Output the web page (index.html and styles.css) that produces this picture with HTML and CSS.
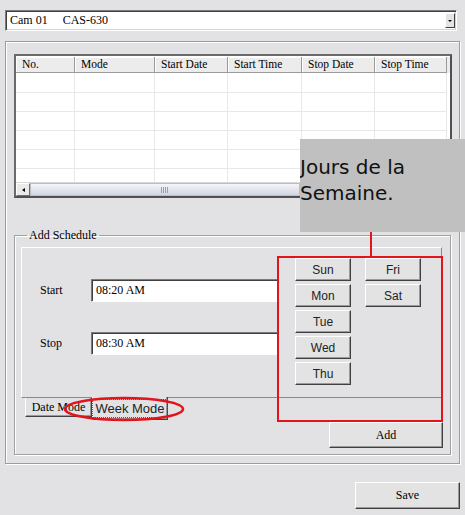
FILE: index.html
```html
<!DOCTYPE html>
<html>
<head>
<meta charset="utf-8">
<link rel="stylesheet" href="styles.css">
</head>
<body>
<div class="combo">
  <span class="combo-text"><span class="cam">Cam 01</span>CAS-630</span>
  <span class="combo-btn"><span class="tri"></span></span>
</div>

<div class="panel">
  <div class="list">
    <div class="lrow head">
      <div class="c c1">No.</div><div class="c c2">Mode</div><div class="c c3">Start Date</div><div class="c c4">Start Time</div><div class="c c5">Stop Date</div><div class="c c6">Stop Time</div>
    </div>
    <div class="lbody">
      <div class="lrow"><div class="c c1"></div><div class="c c2"></div><div class="c c3"></div><div class="c c4"></div><div class="c c5"></div><div class="c c6"></div></div>
      <div class="lrow"><div class="c c1"></div><div class="c c2"></div><div class="c c3"></div><div class="c c4"></div><div class="c c5"></div><div class="c c6"></div></div>
      <div class="lrow"><div class="c c1"></div><div class="c c2"></div><div class="c c3"></div><div class="c c4"></div><div class="c c5"></div><div class="c c6"></div></div>
      <div class="lrow"><div class="c c1"></div><div class="c c2"></div><div class="c c3"></div><div class="c c4"></div><div class="c c5"></div><div class="c c6"></div></div>
      <div class="lrow"><div class="c c1"></div><div class="c c2"></div><div class="c c3"></div><div class="c c4"></div><div class="c c5"></div><div class="c c6"></div></div>
      <div class="lrow"><div class="c c1"></div><div class="c c2"></div><div class="c c3"></div><div class="c c4"></div><div class="c c5"></div><div class="c c6"></div></div>
    </div>
    <div class="hscroll">
      <div class="sb-left"><span class="ltri"></span></div>
      <div class="sb-thumb"><span class="grip"></span></div>
    </div>
  </div>

  <fieldset class="sched">
    <legend>Add Schedule</legend>
    <div class="tabpanel">
      <div class="form">
        <div class="frow"><span class="flabel">Start</span><div class="field">08:20 AM</div></div>
        <div class="frow"><span class="flabel">Stop</span><div class="field">08:30 AM</div></div>
      </div>
      <div class="days">
        <div class="btn day">Sun</div>
        <div class="btn day">Mon</div>
        <div class="btn day">Tue</div>
        <div class="btn day">Wed</div>
        <div class="btn day">Thu</div>
        <div class="btn day">Fri</div>
        <div class="btn day">Sat</div>
      </div>
    </div>
    <div class="tabs">
      <div class="tab">Date Mode</div>
      <div class="tab sel"><span class="focus">Week Mode</span></div>
    </div>
    <div class="addrow"><div class="btn add">Add</div></div>
  </fieldset>
</div>

<div class="saverow"><div class="btn save">Save</div></div>

<div class="tip">Jours de la<br>Semaine.</div>
<div class="redline"></div>
<div class="redbox"></div>
<svg class="ellipse" width="124" height="28" viewBox="0 0 124 28"><ellipse cx="61" cy="13" rx="59" ry="11" fill="none" stroke="#e3141b" stroke-width="2.6"/></svg>
</body>
</html>
```

FILE: styles.css
```css
html, body {
  margin: 0;
  padding: 0;
}
body {
  width: 465px;
  height: 515px;
  background: #e2e2e4;
  font-family: "Liberation Serif", "DejaVu Serif", serif;
  font-size: 12px;
  color: #000;
  padding: 10px 0 0 5px;
  box-sizing: border-box;
  position: relative;
  overflow: hidden;
}

.combo {
  width: 452px;
  height: 21px;
  box-sizing: border-box;
  background: #fff;
  border: 1px solid;
  border-color: #7a7a7a #fff #fff #7a7a7a;
  box-shadow: inset 1px 1px 0 #404040, inset -1px -1px 0 #d4d4d4;
  display: flex;
  align-items: center;
  justify-content: space-between;
  padding: 0 1px 0 4px;
}
.cam { margin-right: 15px; }
.combo-btn {
  width: 10px;
  height: 15px;
  box-sizing: border-box;
  background: #e4e4e4;
  border: 1px solid;
  border-color: #fff #404040 #404040 #fff;
  display: flex;
  align-items: center;
  justify-content: center;
}
.tri {
  width: 0; height: 0;
  border-left: 2px solid transparent;
  border-right: 2px solid transparent;
  border-top: 2px solid #000;
}

.panel {
  margin-top: 10px;
  width: 455px;
  height: 423px;
  box-sizing: border-box;
  border: 1px solid #9c9c9c;
  box-shadow: inset 1px 1px 0 #fff, 1px 1px 0 #fff;
  padding: 12px 0 0 8px;
}

.list {
  width: 438px;
  height: 144px;
  box-sizing: border-box;
  border: 2px solid;
  border-color: #6a6a6a #505050 #505050 #6a6a6a;
  background: #fff;
  display: flex;
  flex-direction: column;
  overflow: hidden;
}
.lrow { display: flex; flex: none; }
.c { flex: none; box-sizing: border-box; }
.c1 { width: 59px; }
.c2 { width: 80px; }
.c3 { width: 73px; }
.c4 { width: 74px; }
.c5 { width: 73px; }
.c6 { width: 72px; }
.head {
  height: 16px;
  background: #ececec;
  margin-top: 1px;
}
.head .c {
  border-right: 1px solid #9a9a9a;
  border-bottom: 1px solid #9a9a9a;
  box-shadow: inset 1px 1px 0 #fff;
  padding-left: 6px;
  line-height: 15px;
  font-size: 11.5px;
}
.lbody {
  flex: 1;
  overflow: hidden;
  display: flex;
  flex-direction: column;
}
.lbody .lrow { height: 19px; }
.lbody .lrow:first-child { height: 20px; }
.lbody .c {
  border-right: 1px solid #e8e8e8;
  border-bottom: 1px solid #e8e8e8;
}
.hscroll {
  flex: none;
  height: 13px;
  display: flex;
  background: #eef0f4;
  border-top: 1px solid #d8d8d8;
}
.sb-left {
  width: 14px;
  box-sizing: border-box;
  background: #eaeaea;
  border: 1px solid;
  border-color: #fff #707070 #707070 #fff;
  display: flex;
  align-items: center;
  justify-content: center;
}
.ltri {
  width: 0; height: 0;
  border-top: 2px solid transparent;
  border-bottom: 2px solid transparent;
  border-right: 3px solid #000;
}
.sb-thumb {
  width: 270px;
  box-sizing: border-box;
  background: linear-gradient(#f4f5f9, #d2d6e2);
  border: 1px solid #b9bdc9;
  display: flex;
  align-items: center;
  justify-content: center;
}
.grip {
  width: 8px;
  height: 6px;
  background: repeating-linear-gradient(90deg, #9aa0b0 0 1px, transparent 1px 2px);
}

.sched {
  margin: 30px 0 0 0;
  width: 437px;
  height: 227px;
  box-sizing: border-box;
  border: 1px solid #a0a0a0;
  box-shadow: inset 1px 1px 0 #fff, 1px 1px 0 #fff;
  padding: 5px 7px 0 6px;
  min-width: 0;
}
.sched legend {
  padding: 0 2px;
  margin-left: 6px;
  line-height: 14px;
  font-size: 12px;
}

.tabpanel {
  height: 151px;
  box-sizing: border-box;
  width: 421px;
  border: 1px solid;
  border-color: #fff #8a8a8a #8a8a8a #fff;
  display: flex;
  align-items: flex-start;
}
.form {
  padding: 31px 0 0 18px;
  display: flex;
  flex-direction: column;
  gap: 30px;
}
.frow {
  display: flex;
  align-items: center;
}
.flabel { width: 51px; }
.field {
  width: 187px;
  height: 23px;
  box-sizing: border-box;
  background: #fff;
  border: 1px solid;
  border-color: #7a7a7a #fff #fff #7a7a7a;
  box-shadow: inset 1px 1px 0 #404040;
  padding-left: 4px;
  line-height: 21px;
}
.days {
  margin: 10px 0 0 17px;
  display: grid;
  grid-template-columns: 56px 56px;
  grid-template-rows: repeat(5, 23px);
  grid-auto-flow: column;
  column-gap: 14px;
  row-gap: 3px;
}
.btn {
  box-sizing: border-box;
  background: #e3e3e3;
  border: 1px solid;
  border-color: #fff #404040 #404040 #fff;
  box-shadow: inset -1px -1px 0 #9a9a9a;
  display: flex;
  align-items: center;
  justify-content: center;
}
.day {
  font-family: "Liberation Sans", Arial, sans-serif;
  font-size: 12px;
  color: #222;
}

.tabs {
  display: flex;
  padding-left: 4px;
  height: 23px;
  align-items: flex-start;
}
.tab {
  height: 19px;
  box-sizing: border-box;
  width: 67px;
  border: 1px solid;
  border-top: none;
  border-color: #fff #404040 #404040 #fff;
  box-shadow: inset -1px -1px 0 #9a9a9a;
  display: flex;
  align-items: center;
  justify-content: center;
  font-size: 12px;
}
.tab.sel {
  width: 76px;
  height: 23px;
  margin-top: -1px;
  background: #e2e2e4;
  font-family: "Liberation Sans", Arial, sans-serif;
  font-size: 13px;
  color: #222;
}
.focus {
  outline: 1px dotted #555;
  outline-offset: 1px;
  padding: 0 1px;
  line-height: 15px;
}
.addrow {
  display: flex;
  justify-content: flex-end;
  margin-top: 1px;
}
.add {
  width: 114px;
  height: 26px;
}
.saverow {
  width: 455px;
  display: flex;
  justify-content: flex-end;
  margin-top: 18px;
}
.save {
  width: 105px;
  height: 27px;
}

.tip {
  position: absolute;
  left: 300px;
  top: 139px;
  width: 165px;
  height: 93px;
  box-sizing: border-box;
  background: #c0c0c0;
  font-family: "DejaVu Sans", Verdana, sans-serif;
  font-size: 20px;
  line-height: 26px;
  color: #111;
  padding-top: 15px;
  white-space: nowrap;
  overflow: hidden;
}
.redline {
  position: absolute;
  left: 370px;
  top: 232px;
  width: 2px;
  height: 25px;
  background: #e3141b;
}
.redbox {
  position: absolute;
  left: 277px;
  top: 256px;
  width: 166px;
  height: 166px;
  box-sizing: border-box;
  border: 2px solid #e3141b;
}
.ellipse {
  position: absolute;
  left: 63px;
  top: 396px;
}
```
